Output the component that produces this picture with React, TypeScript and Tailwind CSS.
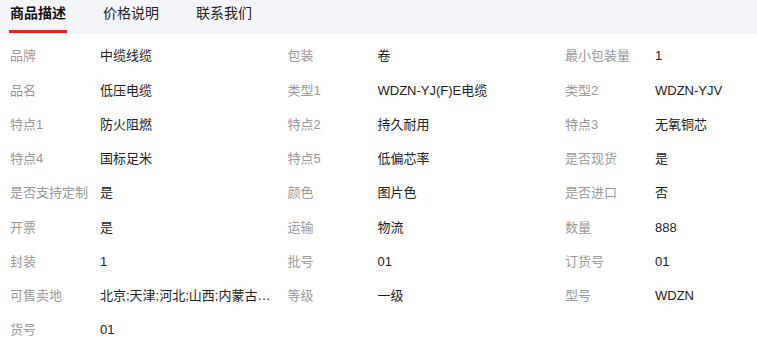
import React from "react";

const rows: [string, string][][] = [
  [["品牌", "中缆线缆"], ["包装", "卷"], ["最小包装量", "1"]],
  [["品名", "低压电缆"], ["类型1", "WDZN-YJ(F)E电缆"], ["类型2", "WDZN-YJV"]],
  [["特点1", "防火阻燃"], ["特点2", "持久耐用"], ["特点3", "无氧铜芯"]],
  [["特点4", "国标足米"], ["特点5", "低偏芯率"], ["是否现货", "是"]],
  [["是否支持定制", "是"], ["颜色", "图片色"], ["是否进口", "否"]],
  [["开票", "是"], ["运输", "物流"], ["数量", "888"]],
  [["封装", "1"], ["批号", "01"], ["订货号", "01"]],
  [["可售卖地", "北京;天津;河北;山西;内蒙古;辽宁;吉林;黑龙江"], ["等级", "一级"], ["型号", "WDZN"]],
  [["货号", "01"]],
];

export default function App() {
  return (
    <div
      className="w-[757px] h-[341px] overflow-hidden bg-white"
      style={{ fontFamily: '"Liberation Sans", "Noto Sans CJK SC", sans-serif' }}
    >
      <div className="h-[34px] bg-[#f4f5f9] flex pl-[9px] gap-[35px]">
        <div className="relative w-[58px] flex justify-center pt-[4px] text-[14px] leading-[18px] font-bold text-[#111]">
          商品描述
          <div className="absolute left-0 right-0 bottom-[1px] h-[3px] bg-[#e4252a]" />
        </div>
        <div className="w-[58px] flex justify-center pt-[4px] text-[14px] leading-[18px] text-[#222]">
          价格说明
        </div>
        <div className="w-[58px] flex justify-center pt-[4px] text-[14px] leading-[18px] text-[#222]">
          联系我们
        </div>
      </div>
      <div className="pt-[5px] pl-[10px]">
        {rows.map((row, i) => (
          <div key={i} className="flex h-[34.25px] items-center text-[13px]">
            {row.map(([k, v], j) => (
              <div key={j} className="flex shrink-0 w-[277.5px] items-center">
                <div className="w-[90px] shrink-0 text-[#999] whitespace-nowrap">{k}</div>
                <div className="w-[172px] shrink-0 text-[#222] truncate">{v}</div>
              </div>
            ))}
          </div>
        ))}
      </div>
    </div>
  );
}
